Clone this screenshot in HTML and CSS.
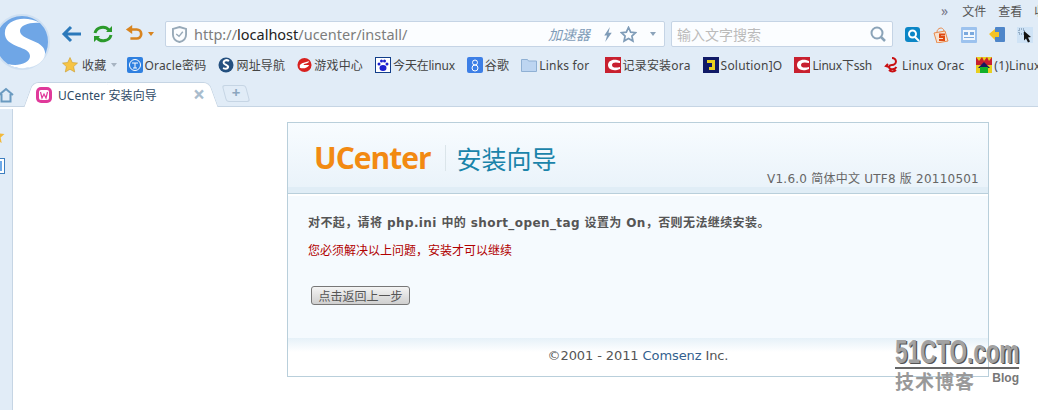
FILE: index.html
```html
<!DOCTYPE html>
<html lang="zh-CN">
<head>
    <meta charset="UTF-8">
    <title>UCenter 安装向导</title>
    <link rel="stylesheet" href="styles.css">
</head>
<body>
    <div class="browser">
        <!-- 浏览器顶部 -->
        <div class="chrome">
            <svg class="logo" viewBox="0 0 56 56" width="56" height="56">
                <circle cx="28" cy="28" r="27" fill="#6fa6e6" stroke="#cfe0f2" stroke-width="2"/>
                <path d="M46 9C30 0 9 6 11 21c2 13 25 11 25 21 0 7-12 11-22 8 13 9 38 3 37-12-1-12-25-12-25-21 0-6 10-9 20-8z" fill="#fff"/>
            </svg>

            <div class="menu-row">
                <span class="menu-more">»</span>
                <span>文件</span>
                <span>查看</span>
                <span>收藏</span>
            </div>

            <div class="nav-row">
                <svg class="nav-icon" viewBox="0 0 20 20" width="20" height="20"><path d="M20 10H4M10 3l-7 7 7 7" fill="none" stroke="#2c79bb" stroke-width="3"/></svg>
                <svg class="nav-icon" viewBox="0 0 20 20" width="20" height="20"><path d="M2 9a8 7.500 0 0 1 14-3M18 11a8 7.500 0 0 1-14 3" fill="none" stroke="#2b9a2b" stroke-width="3"/><path d="M13 8h6V2zM7 12H1v6z" fill="#2b9a2b"/></svg>
                <svg class="nav-icon" viewBox="0 0 20 20" width="18" height="20"><path d="M6 5h7a4.500 4.500 0 0 1 0 10H6" fill="none" stroke="#d8841f" stroke-width="3"/><path d="M8 0 1 5l7 5z" fill="#d8841f"/></svg>
                <span class="arrow arrow-orange"></span>
                <div class="address">
                    <svg viewBox="0 0 16 18" width="15" height="17"><path d="M8 1l7 2v6c0 4-3 7-7 8-4-1-7-4-7-8V3z" fill="none" stroke="#97a9b8" stroke-width="2"/><path d="M4.500 8.500 7.500 11l4-5" fill="none" stroke="#97a9b8" stroke-width="1.500"/></svg>
                    <span class="url">http://<b>localhost</b>/ucenter/install/</span>
                    <span class="speedup">加速器</span>
                    <svg viewBox="0 0 10 16" width="10" height="15"><path d="M7 0 1 9h3l-2 7 7-10H5.500z" fill="#7f9cb8"/></svg>
                    <svg viewBox="0 0 18 18" width="17" height="17"><path d="M9 1.500l2.300 5 5.200.600-3.900 3.500 1.100 5.400L9 13.300 4.300 16l1.100-5.400L1.500 7.100l5.200-.600z" fill="none" stroke="#7f9cb8" stroke-width="1.800"/></svg>
                    <span class="arrow"></span>
                </div>
                <div class="search">
                    <span>输入文字搜索</span>
                    <svg viewBox="0 0 16 16" width="16" height="16"><circle cx="7" cy="7" r="5.500" fill="none" stroke="#8aa3b8" stroke-width="2"/><path d="M11 11l4 4" stroke="#8aa3b8" stroke-width="2.500"/></svg>
                </div>
                <div class="tools">
                    <svg viewBox="0 0 16 16" width="16" height="16"><rect width="15" height="15" rx="3" fill="#0b86c6"/><circle cx="7.500" cy="7" r="3.500" fill="none" stroke="#fff" stroke-width="2"/><path d="M10 10l4 4" stroke="#fff" stroke-width="2"/></svg>
                    <svg viewBox="0 0 16 16" width="16" height="16"><path d="M1 6l11-2 3 10-11 2z" fill="#f6e3d2" stroke="#e98a4c"/><path d="M4 5c0-4 6-6 7-1" fill="none" stroke="#e98a4c"/><path d="M12 7.500H7v2.500h4v3H6" fill="none" stroke="#df4a12" stroke-width="2"/></svg>
                    <svg viewBox="0 0 16 16" width="16" height="16"><rect width="16" height="16" rx="1" fill="#9cc2ee"/><rect x="2" y="3" width="12" height="10" fill="#f1f7fd"/><path d="M3 5h4v3H3zM9 5h4v3H9zM3 10h10v1H3z" fill="#7ba9dd"/></svg>
                    <svg viewBox="0 0 16 16" width="16" height="16"><rect x="6" y="0" width="10" height="15" rx="1" fill="#4f86c9"/><path d="M0 7l6-5v3h4v5H6v3z" fill="#f6c324"/></svg>
                    <svg viewBox="0 0 16 16" width="16" height="16"><rect width="16" height="16" fill="#cfe3f6"/><path d="M2 2h5v5H2z" fill="none" stroke="#5a7a99" stroke-dasharray="1 1"/><path d="M7 4l7 6-3 .500 2 4-2 1-2-4-2 2z" fill="#111"/></svg>
                </div>
            </div>

            <div class="bookmark-row">
                <span class="bookmark fav">
                    <svg viewBox="0 0 16 16" width="16" height="16"><path d="M8 .500l2.300 5 5.200.600-3.900 3.500 1.100 5.400L8 12.300 3.300 15l1.100-5.400L.500 6.100l5.200-.600z" fill="#f6c445" stroke="#c99a2a" stroke-width=".6"/></svg>
                    收藏<span class="arrow arrow-grey"></span>
                </span>
                <span class="bookmark oracle">
                    <svg viewBox="0 0 16 16" width="16" height="16"><rect width="16" height="16" rx="2" fill="#2f80e0"/><circle cx="8" cy="8" r="5.500" fill="none" stroke="#fff"/><path d="M5 6h6M8 6v5M6 11h4" stroke="#fff"/></svg>
                    Oracle密码
                </span>
                <span class="bookmark">
                    <svg viewBox="0 0 16 16" width="16" height="16"><circle cx="8" cy="8" r="7.500" fill="#24507f"/><path d="M11 4C8 2 4.500 4 6 6.500c1 1.500 5 2 4 4-.6 1.200-3 1.300-5 .600" fill="none" stroke="#fff" stroke-width="2"/></svg>
                    网址导航
                </span>
                <span class="bookmark">
                    <svg viewBox="0 0 16 16" width="15" height="16"><circle cx="8" cy="8" r="7.500" fill="#d8211f"/><path d="M3 8c3-3 7-3 10-4-1 3-6 2-6 4h6c-2 4-7 4-10 3" fill="#fff"/></svg>
                    游戏中心
                </span>
                <span class="bookmark tight">
                    <svg viewBox="0 0 16 16" width="16" height="16"><rect x=".500" y=".500" width="15" height="15" fill="#fff" stroke="#123e8a"/><ellipse cx="8" cy="11" rx="3.500" ry="3" fill="#1c1fd0"/><circle cx="4" cy="7" r="1.500" fill="#1c1fd0"/><circle cx="6.500" cy="4" r="1.500" fill="#1c1fd0"/><circle cx="9.500" cy="4" r="1.500" fill="#1c1fd0"/><circle cx="12" cy="7" r="1.500" fill="#1c1fd0"/></svg>
                    今天在linux
                </span>
                <span class="bookmark">
                    <svg viewBox="0 0 16 16" width="16" height="16"><rect width="16" height="16" rx="2" fill="#3d7fe6"/><circle cx="8" cy="5.500" r="2.500" fill="none" stroke="#fff"/><circle cx="8" cy="11" r="3" fill="none" stroke="#fff"/></svg>
                    谷歌
                </span>
                <span class="bookmark">
                    <svg viewBox="0 0 16 16" width="16" height="16"><path d="M.500 2.500h6l1 1.500h8v10.500H.500z" fill="#bdd5f1" stroke="#8fb0d4"/></svg>
                    Links for
                </span>
                <span class="bookmark bookmark-wide">
                    <svg viewBox="0 0 16 16" width="16" height="16"><rect width="16" height="16" fill="#c8202f"/><path d="M15 4C8 1 3 4 3 8s5 7 12 4v-2c-4 1-8 1-8-2s4-3 8-2z" fill="#fff"/></svg>
                    记录安装ora
                </span>
                <span class="bookmark">
                    <svg viewBox="0 0 16 16" width="16" height="16"><rect width="16" height="16" fill="#101a66"/><path d="M4 3h8v10H6v-3h3V6H4z" fill="#e8d020"/></svg>
                    Solution]O
                </span>
                <span class="bookmark tight">
                    <svg viewBox="0 0 16 16" width="16" height="16"><rect width="16" height="16" fill="#c8202f"/><path d="M15 4C8 1 3 4 3 8s5 7 12 4v-2c-4 1-8 1-8-2s4-3 8-2z" fill="#fff"/></svg>
                    Linux下ssh
                </span>
                <span class="bookmark">
                    <svg viewBox="0 0 16 16" width="16" height="16"><path d="M8 1a4 3.500 0 1 1-.1 7c-3 0-4 3-1 4 3 .500 5-1 5.500-2M4 7l-2 2 3 1M5 13c2 2 5 2 7 0" fill="none" stroke="#c90f12" stroke-width="2"/></svg>
                    Linux Orac
                </span>
                <span class="bookmark">
                    <svg viewBox="0 0 16 16" width="16" height="16"><rect width="16" height="16" fill="#e8d020"/><path d="M0 0l3 4 3-4 2 4 3-4 2 4 3-4v8H0z" fill="#c8202f"/><path d="M8 5l6 6H2z" fill="#17175c"/><rect x="4" y="10" width="8" height="6" fill="#12b02a"/></svg>
                    (1)Linux
                </span>
            </div>

            <div class="tab-row">
                <svg viewBox="0 0 16 16" width="16" height="16"><path d="M1 8l7-6 7 6M3.500 7v7.500h9V7" fill="none" stroke="#6a9ac0" stroke-width="2"/></svg>
                <div class="tab">
                    <svg viewBox="0 0 16 16" width="16" height="16"><rect width="16" height="16" rx="5" fill="#e0399a"/><rect x="3" y="3" width="10" height="10" rx="2" fill="#fff"/><path d="M4.500 5l1.500 6 2-4 2 4 1.500-6" fill="none" stroke="#e0399a" stroke-width="1.200"/></svg>
                    <span class="tab-title">UCenter 安装向导</span>
                    <span class="tab-close">×</span>
                </div>
                <div class="tab-new">+</div>
            </div>
        </div>

        <!-- 页面内容 -->
        <div class="viewport">
            <div class="side">
                <svg viewBox="0 0 16 16" width="16" height="16"><path d="M8 .500l2.300 5 5.200.600-3.900 3.500 1.100 5.400L8 12.300 3.300 15l1.100-5.400L.500 6.100l5.200-.600z" fill="#f2b93b"/></svg>
                <svg viewBox="0 0 16 16" width="16" height="16"><rect x=".500" y=".500" width="15" height="15" fill="#fff" stroke="#3e7fc0"/><rect x="3" y="3" width="10" height="10" fill="#6da9e8"/></svg>
            </div>
            <div class="panel">
                <div class="panel-head">
                    <div class="brand">
                        <span class="brand-logo">UCenter</span>
                        <span class="brand-title">安装向导</span>
                    </div>
                    <div class="version">V1.6.0 简体中文 UTF8 版 20110501</div>
                </div>
                <div class="panel-body">
                    <p class="msg">对不起，请将 php.ini 中的 short_open_tag 设置为 On，否则无法继续安装。</p>
                    <p class="err">您必须解决以上问题，安装才可以继续</p>
                    <button class="btn-back">点击返回上一步</button>
                </div>
                <div class="panel-foot">©2001 - 2011 <a href="#">Comsenz</a> Inc.</div>
            </div>
        </div>

        <!-- 水印 -->
        <div class="watermark">
            <div class="wm-site">51CTO.com</div>
            <div class="wm-sub"><span>技术博客</span><small>Blog</small></div>
        </div>
    </div>
</body>
</html>
```

FILE: styles.css
```css
* {
    margin: 0;
    padding: 0;
    box-sizing: border-box;
}

html, body {
    width: 1038px;
    height: 410px;
    overflow: hidden;
    background: #fff;
}

.browser {
    position: relative;
    width: 1038px;
    height: 410px;
    overflow: hidden;
    font-family: "DejaVu Sans", "Noto Sans CJK SC", sans-serif;
    font-size: 12px;
}

.chrome {
    position: relative;
    height: 107px;
    background: #e1ecf7;
    border-bottom: 1px solid #c6d5e4;
    font-family: "Noto Sans", "Noto Sans CJK SC", sans-serif;
    color: #444;
}

.logo {
    position: absolute;
    left: -6px;
    top: 14px;
}

.menu-row {
    height: 21px;
    display: flex;
    align-items: center;
    gap: 12px;
    padding-left: 941px;
    white-space: nowrap;
    color: #555;
}

.menu-more {
    color: #778;
    font-size: 14px;
    margin-right: 2px;
}

.nav-row {
    height: 26px;
    display: flex;
    align-items: center;
    padding-left: 61px;
}

.nav-icon {
    margin-right: 12px;
}

.arrow {
    display: inline-block;
    width: 0;
    height: 0;
    border: 3px solid transparent;
    border-top: 4px solid #8ba3ba;
    border-bottom: 0;
}

.arrow-orange {
    border-top-color: #d8841f;
    margin: 0 11px 0 -7px;
}

.arrow-grey {
    border-top-color: #a7b4c2;
    margin-left: 1px;
}

.address,
.search {
    height: 26px;
    flex: none;
    background: #fbfdff;
    border: 1px solid #c5d4e5;
    border-radius: 2px;
    display: flex;
    align-items: center;
}

.address {
    width: 500px;
    padding: 0 8px 0 6px;
    gap: 7px;
}

.url {
    flex: 1;
    font-size: 14.500px;
    color: #7d7d7d;
}

.url b {
    font-weight: 400;
    color: #222;
}

.speedup {
    font-size: 14px;
    font-style: italic;
    color: #7f9cb8;
    margin-right: 6px;
}

.address .arrow {
    margin-left: 6px;
}

.search {
    width: 222px;
    margin-left: 6px;
    padding: 0 6px 0 5px;
    justify-content: space-between;
    font-size: 14px;
    color: #bbb;
}

.tools {
    display: flex;
    align-items: center;
    gap: 12px;
    margin: 1px 0 0 12px;
}

.tools svg {
    flex: none;
}

.bookmark-row {
    height: 24px;
    margin-top: 6px;
    display: flex;
    align-items: center;
    gap: 12px;
    padding-left: 62px;
    white-space: nowrap;
}

.bookmark {
    display: flex;
    align-items: center;
    gap: 2px;
    font-size: 12px;
    letter-spacing: .2px;
}

.bookmark svg {
    flex: none;
}

.tight {
    letter-spacing: -.2px;
}

.fav {
    gap: 4px;
    margin-right: -2px;
}

.oracle {
    gap: 1px;
}

.bookmark-wide {
    margin-left: 3px;
}

.tab-row {
    height: 25px;
    margin-top: 4px;
    margin-left: -2px;
    display: flex;
    align-items: flex-end;
}

.tab-row > svg {
    margin-bottom: 3px;
}

.tab {
    position: relative;
    z-index: 0;
    width: 186px;
    height: 25px;
    margin-left: 14px;
    margin-bottom: -1px;
    padding: 0 9px 0 8px;
    display: flex;
    align-items: center;
    gap: 6px;
}

/* los lados inclinados de la pestaña */
.tab::before,
.tab::after {
    content: "";
    position: absolute;
    z-index: -1;
    top: 0;
    bottom: 0;
    width: 55%;
    background: #fff;
    border: 1px solid #c6d5e4;
    border-bottom: 0;
}

.tab::before {
    left: 0;
    border-right: 0;
    border-radius: 6px 0 0 0;
    transform: skewX(-20deg);
}

.tab::after {
    right: 0;
    border-left: 0;
    border-radius: 0 6px 0 0;
    transform: skewX(20deg);
}

.tab-title {
    flex: 1;
    font-size: 12px;
    letter-spacing: .1px;
    color: #2f4a66;
}

.tab-close {
    font-size: 21px;
    font-weight: 700;
    line-height: 1;
    color: #a9bccd;
}

.tab-new {
    position: relative;
    z-index: 0;
    width: 24px;
    height: 17px;
    margin: 0 0 4px 10px;
    text-align: center;
    font-size: 15px;
    font-weight: 700;
    line-height: 15px;
    color: #8ba6bf;
}

.tab-new::before {
    content: "";
    position: absolute;
    z-index: -1;
    top: 0;
    left: 0;
    right: 0;
    bottom: 0;
    border: 1px solid #c6d5e4;
    border-radius: 3px;
    transform: skewX(15deg);
}

.viewport {
    height: 303px;
    display: flex;
    background: #fff;
}

.side {
    width: 13px;
    flex: none;
    margin-top: 2px;
    background: #e1ecf7;
    border-right: 1px solid #c6d5e4;
    display: flex;
    flex-direction: column;
    align-items: flex-end;
    gap: 14px;
    padding-top: 19px;
    overflow: hidden;
}

.side svg {
    flex: none;
    margin-right: 7px;
}

.panel {
    width: 702px;
    height: 255px;
    margin: 15px 0 0 274px;
    border: 1px solid #b9cfdb;
    display: flex;
    flex-direction: column;
    background: #f5fafe;
}

.panel-head {
    height: 71px;
    flex: none;
    padding: 22px 9px 0 26px;
    display: flex;
    flex-direction: column;
    justify-content: space-between;
    background: linear-gradient(#f8fcff, #eaf3fa 91%, #e0edf6 91%);
    border-bottom: 1px solid #b9cfdb;
}

.brand {
    display: flex;
    align-items: center;
}

.brand-logo {
    font-family: "Open Sans", sans-serif;
    font-size: 30px;
    font-weight: 700;
    line-height: 26px;
    letter-spacing: -1px;
    padding-right: 14px;
    border-right: 1px solid #dbe5ea;
    color: #f28a12;
}

.brand-title {
    font-family: "Noto Sans CJK SC", sans-serif;
    font-size: 25px;
    line-height: 26px;
    color: #1a84aa;
    padding-left: 11px;
}

.version {
    text-align: right;
    color: #666;
    line-height: 16px;
    letter-spacing: .23px;
    margin-bottom: 8px;
}

.panel-body {
    flex: 1;
    padding: 19px 20px 0;
    border-top: 2px solid #fff;
    color: #555;
}

.msg {
    font-weight: 700;
    line-height: 16px;
    letter-spacing: .4px;
}

.err {
    margin-top: 12px;
    line-height: 16px;
    color: #b10000;
}

.btn-back {
    display: block;
    width: 99px;
    height: 19px;
    margin: 27px 0 0 3px;
    border: 1px solid #777;
    border-radius: 3px;
    background: linear-gradient(#f4f4f4, #cfcfcf);
    font-family: "Noto Sans CJK SC", sans-serif;
    font-size: 12px;
    line-height: 16px;
    color: #555;
}

.panel-foot {
    height: 38px;
    flex: none;
    background: linear-gradient(#e6f1f8, #fff 37%);
    text-align: center;
    padding-top: 10px;
    font-size: 13px;
    letter-spacing: -.1px;
    line-height: 16px;
    color: #555;
}

.panel-foot a {
    color: #335f8f;
    text-decoration: none;
}

/* se queda encima de todo */
.watermark {
    position: absolute;
    left: 895px;
    top: 335px;
    width: 124px;
    font-family: "Liberation Sans", "Noto Sans CJK SC", sans-serif;
    color: #999;
}

.wm-site {
    width: 188px;
    font-size: 34px;
    font-weight: 700;
    line-height: 32px;
    white-space: nowrap;
    transform: scaleX(.66);
    transform-origin: left;
    color: #a2a2a2;
    text-shadow: 2px 1px 0 #555;
    border-bottom: 2px solid #666;
}

.wm-sub {
    display: flex;
    justify-content: space-between;
    font-size: 19px;
    font-weight: 700;
    line-height: 24px;
    letter-spacing: 1px;
    padding-top: 2px;
}

.wm-sub small {
    font-size: 12px;
    line-height: 14px;
    letter-spacing: 0;
    color: #777;
}
```
